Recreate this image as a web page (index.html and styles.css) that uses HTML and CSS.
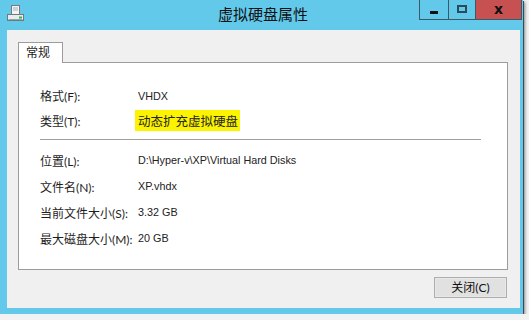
FILE: index.html
```html
<!DOCTYPE html>
<html lang="zh-CN">
<head>
    <meta charset="UTF-8">
    <title>虚拟硬盘属性</title>
    <link rel="stylesheet" href="styles.css">
</head>
<body>
    <div class="window">
        <div class="titlebar">
            <svg class="app-icon" width="18" height="18" viewBox="0 0 18 18">
                <rect x="4.5" y="0.5" width="8" height="9" fill="#f4f4f4" stroke="#7a7a7a"/>
                <rect x="6" y="2" width="5" height="4" fill="#c8d4dc"/>
                <rect x="0.5" y="9.5" width="16" height="6" fill="#e8ecee" stroke="#6e7a80"/>
                <rect x="1.5" y="14" width="14" height="1" fill="#9aa4a8"/>
                <rect x="12" y="11.5" width="3" height="2" fill="#2fb84a"/>
            </svg>
            <div class="title">虚拟硬盘属性</div>
            <div class="caption-buttons">
                <div class="cap-btn cap-min"><span class="dash"></span></div>
                <div class="cap-btn cap-max"><span class="box"></span></div>
                <div class="cap-btn cap-close">x</div>
            </div>
        </div>

        <div class="client">
            <div class="tabs">
                <div class="tab">常规</div>
            </div>
            <div class="panel">
                <div class="rows">
                    <div class="label">格式(F):</div>
                    <div class="value">VHDX</div>
                    <div class="label">类型(T):</div>
                    <div class="value"><span class="mark">动态扩充虚拟硬盘</span></div>
                </div>
                <div class="separator"></div>
                <div class="rows rows-info">
                    <div class="label">位置(L):</div>
                    <div class="value">D:\Hyper-v\XP\Virtual Hard Disks</div>
                    <div class="label">文件名(N):</div>
                    <div class="value">XP.vhdx</div>
                    <div class="label">当前文件大小(S):</div>
                    <div class="value">3.32 GB</div>
                    <div class="label">最大磁盘大小(M):</div>
                    <div class="value">20 GB</div>
                </div>
            </div>
            <div class="footer">
                <button type="button" class="btn">关闭(C)</button>
            </div>
        </div>
    </div>
</body>
</html>
```

FILE: styles.css
```css
/* Ventana */
body {
    margin: 0;
    padding: 0;
    background-color: #f2f2f2;
    font-family: 'Lato', 'Noto Sans CJK SC', sans-serif;
    font-size: 12px;
    color: #1e1e1e;
}

.window {
    width: 523px;
    height: 314px;
    background-color: #62c9ea;
    box-shadow: 1px 1px 0 #3c4a50, 2px 2px 3px rgba(0, 0, 0, 0.45);
    display: flex;
    flex-direction: column;
}

/* Barra de título */
.titlebar {
    height: 30px;
    display: grid;
    grid-template-columns: 1fr auto 1fr;
    align-items: start;
}

.app-icon {
    margin: 5px 0 0 7px;
}

.title {
    font-family: 'Noto Sans CJK SC', sans-serif;
    font-size: 15px;
    line-height: 28px;
    color: #111;
    padding-left: 3px;
}

.caption-buttons {
    display: flex;
    justify-self: end;
    margin-right: 1px;
}

.cap-btn {
    height: 19px;
    border: 1px solid #3b5966;
    border-top: none;
    display: flex;
    align-items: center;
    justify-content: center;
    box-sizing: content-box;
}

.cap-min {
    width: 28px;
}

.cap-max {
    width: 26px;
    border-left: none;
}

.cap-close {
    width: 45px;
    border-left: none;
    background-color: #c75050;
    color: #111;
    font-family: 'DejaVu Sans', sans-serif;
    font-weight: bold;
    font-size: 14px;
    line-height: 1;
    padding-bottom: 2px;
    height: 17px;
}

.dash {
    width: 8px;
    height: 3px;
    background-color: #111;
    margin-top: 6px;
}

.box {
    width: 6px;
    height: 4px;
    border: 2px solid #2d4a58;
    margin-top: -2px;
}

/* Área cliente */
.client {
    margin: 0 3px 6px 7px;
    height: 278px;
    background-color: #f0f0f0;
    padding: 12px 12px 0 11px;
    box-sizing: border-box;
}

.tabs {
    display: flex;
    height: 20px;
}

.tab {
    width: 45px;
    height: 21px;
    background-color: #fff;
    border: 1px solid #9c9c9c;
    border-bottom: none;
    padding-left: 7px;
    box-sizing: border-box;
    line-height: 19px;
    position: relative;
    z-index: 1;
}

.panel {
    width: 490px;
    height: 208px;
    background-color: #fff;
    border: 1px solid #9c9c9c;
    box-sizing: border-box;
    padding: 20px 0 0 21px;
}

.rows {
    display: grid;
    grid-template-columns: 98px auto;
    grid-auto-rows: 25px;
    align-items: center;
}

.rows-info {
    grid-auto-rows: 26px;
}

.value {
    color: #222;
    font-family: 'Liberation Sans', 'Noto Sans CJK SC', sans-serif;
    font-size: 10.8px;
}

.mark {
    background-color: #fbf300;
    padding: 1px 2px 1px 3px;
    margin-left: -3px;
    font-family: 'Noto Sans CJK SC', sans-serif;
    font-size: 12.5px;
}

.separator {
    width: 441px;
    height: 1px;
    background-color: #a0a0a0;
    margin: 6px 0 7px 0;
}

/* Pie */
.footer {
    display: flex;
    justify-content: flex-end;
    padding-top: 7px;
    padding-right: 1px;
}

.btn {
    width: 73px;
    height: 21px;
    font-family: 'Lato', 'Noto Sans CJK SC', sans-serif;
    font-size: 12px;
    color: #111;
    background-color: #e1e1e1;
    border: 1px solid #adadad;
    box-shadow: inset 0 0 0 1px #e8e8e8;
    padding: 0;
    line-height: 18px;
}
```
